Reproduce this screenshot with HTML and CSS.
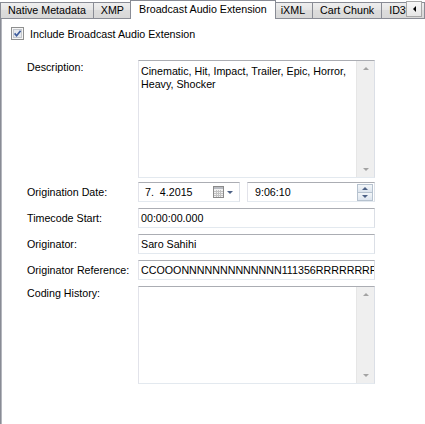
FILE: index.html
```html
<!DOCTYPE html>
<html lang="en">
<head>
    <meta charset="UTF-8">
    <title>Broadcast Audio Extension</title>
    <link rel="stylesheet" href="styles.css">
</head>
<body>
    <div class="tabs">
        <div class="tab">Native Metadata</div>
        <div class="tab">XMP</div>
        <div class="tab active">Broadcast Audio Extension</div>
        <div class="tab">iXML</div>
        <div class="tab">Cart Chunk</div>
        <div class="tab">ID3v2</div>
        <div class="tab-scroll"><span class="arrow-left"></span></div>
    </div>
    <div class="panel">
        <label class="check">
            <svg class="check-box" width="13" height="13" viewBox="0 0 13 13">
                <rect x="0.5" y="0.5" width="12" height="12" fill="#f6f6f6" stroke="#8e8f8f"/>
                <rect x="2.5" y="2.5" width="8" height="8" fill="#e6e9ee" stroke="#c3c7cd"/>
                <path d="M3.6 6.4 L5.6 8.7 L9.6 3.7" fill="none" stroke="#3d5c9c" stroke-width="1.7"/>
            </svg>
            Include Broadcast Audio Extension
        </label>
        <div class="form">
            <div class="label label-area">Description:</div>
            <div class="area desc">
                <div class="area-text">Cinematic, Hit, Impact, Trailer, Epic, Horror,<br>Heavy, Shocker</div>
                <div class="vscroll"><span class="arrow-up"></span><span class="arrow-down"></span></div>
            </div>

            <div class="label">Origination Date:</div>
            <div class="date-row">
                <div class="field date">
                    <span>7.&nbsp; 4.2015</span>
                    <span class="cal">
                        <svg width="12" height="12" viewBox="0 0 12 12">
                            <rect x="0.5" y="0.5" width="10" height="11" fill="#f2f2f2" stroke="#8a8a8a"/>
                            <rect x="1" y="1" width="9" height="2" fill="#b9bcc2"/>
                            <path d="M1 5.5 H10 M1 7.5 H10 M1 9.5 H10 M3.5 4 V11 M5.5 4 V11 M7.5 4 V11" stroke="#c2c2c2" stroke-width="1"/>
                        </svg>
                        <span class="arrow-drop"></span>
                    </span>
                </div>
                <div class="field time">
                    <span>9:06:10</span>
                    <span class="spin">
                        <span class="spin-btn"><span class="arrow-up dark"></span></span>
                        <span class="spin-btn"><span class="arrow-down dark"></span></span>
                    </span>
                </div>
            </div>

            <div class="label">Timecode Start:</div>
            <div class="field">00:00:00.000</div>

            <div class="label">Originator:</div>
            <div class="field">Saro Sahihi</div>

            <div class="label">Originator Reference:</div>
            <div class="field clip">CCOOONNNNNNNNNNNNN111356RRRRRRRRRRR</div>

            <div class="label label-area">Coding History:</div>
            <div class="area history">
                <div class="area-text"></div>
                <div class="vscroll"><span class="arrow-up"></span><span class="arrow-down"></span></div>
            </div>
        </div>
    </div>
</body>
</html>
```

FILE: styles.css
```css
body {
    margin: 0;
    background-color: #fff;
    font-family: "Liberation Sans", Arial, sans-serif;
    font-size: 10.7px;
    color: #000;
}
.tabs {
    position: relative;
    display: flex;
    align-items: flex-end;
    height: 19px;
    overflow: hidden;
    white-space: nowrap;
    box-shadow: inset 0 -1px #898c95;
}
.tab {
    flex-shrink: 0;
    box-sizing: border-box;
    height: 17px;
    padding: 0 7px;
    line-height: 15px;
    border: 1px solid #898c95;
    margin-left: -1px;
    background: linear-gradient(#efefef, #e4e4e4 50%, #dcdcdc 50%, #d8d8d8);
}
.tab:first-child {
    margin-left: 0;
}
.tab.active {
    position: relative;
    z-index: 1;
    height: 19px;
    line-height: 17px;
    margin: 0 -2px 0 -2px;
    padding: 0 8px;
    border-bottom: none;
    background: #fff;
}
.tab-scroll {
    position: absolute;
    z-index: 2;
    top: 1px;
    right: 3px;
    box-sizing: border-box;
    width: 16px;
    height: 16px;
    border: 1px solid #a7a7a7;
    background: linear-gradient(#f7f7f7, #e6e6e6);
    display: flex;
    align-items: center;
    justify-content: center;
}
.arrow-left {
    width: 0;
    height: 0;
    border-top: 3px solid transparent;
    border-bottom: 3px solid transparent;
    border-right: 3px solid #000;
}
.panel {
    border-left: 1px solid #898c95;
    box-shadow: inset 1px 0 #b4b6bd;
    min-height: 405px;
    padding: 8px 0 0 10px;
}
.check {
    display: flex;
    align-items: center;
    gap: 6px;
    height: 13px;
}
.form {
    display: grid;
    grid-template-columns: 111px 237px;
    row-gap: 6px;
    margin: 20px 0 0 16px;
}
.label {
    padding-top: 4px;
    line-height: 13px;
}
.label.label-area {
    padding-top: 1px;
}
.field {
    box-sizing: border-box;
    height: 20px;
    line-height: 18px;
    padding: 0 2px;
    border: 1px solid;
    border-color: #abadb3 #dbdfe6 #e3e9ef #e2e3ea;
    background: #fff;
    white-space: nowrap;
}
.field.clip {
    overflow: hidden;
}
.date-row {
    display: flex;
    gap: 7px;
}
.date, .time {
    display: flex;
    align-items: center;
    justify-content: space-between;
}
.date {
    width: 102px;
    padding: 0 6px 0 6px;
}
.time {
    flex: 1;
    padding: 0 1px 0 7px;
}
.cal {
    display: flex;
    align-items: center;
    gap: 2px;
}
.arrow-drop {
    width: 0;
    height: 0;
    border-left: 3px solid transparent;
    border-right: 3px solid transparent;
    border-top: 3px solid #4d6185;
}
.spin {
    display: flex;
    flex-direction: column;
    width: 16px;
    height: 17px;
}
.spin-btn {
    flex: 1;
    display: flex;
    align-items: center;
    justify-content: center;
    border: 1px solid #b6c2cf;
    background: linear-gradient(#f3f6f9, #dde5ee);
}
.spin-btn + .spin-btn {
    border-top: none;
}
.area {
    display: flex;
    box-sizing: border-box;
    border: 1px solid;
    border-color: #abadb3 #dbdfe6 #e3e9ef #e2e3ea;
    background: #fff;
}
.area.desc {
    height: 118px;
    margin-bottom: -2px;
}
.area.history {
    height: 98px;
}
.area-text {
    flex: 1;
    padding: 4px 2px;
    line-height: 13px;
}
.vscroll {
    width: 17px;
    background: #efefef;
    border-left: 1px solid #e6e6e6;
    display: flex;
    flex-direction: column;
    align-items: center;
    justify-content: space-between;
    padding: 6px 0;
}
.arrow-up, .arrow-down {
    width: 0;
    height: 0;
    border-left: 3px solid transparent;
    border-right: 3px solid transparent;
}
.arrow-up {
    border-bottom: 3px solid #a3a3a3;
}
.arrow-down {
    border-top: 3px solid #a3a3a3;
}
.arrow-up.dark {
    border-bottom-color: #4d6185;
}
.arrow-down.dark {
    border-top-color: #4d6185;
}
```
